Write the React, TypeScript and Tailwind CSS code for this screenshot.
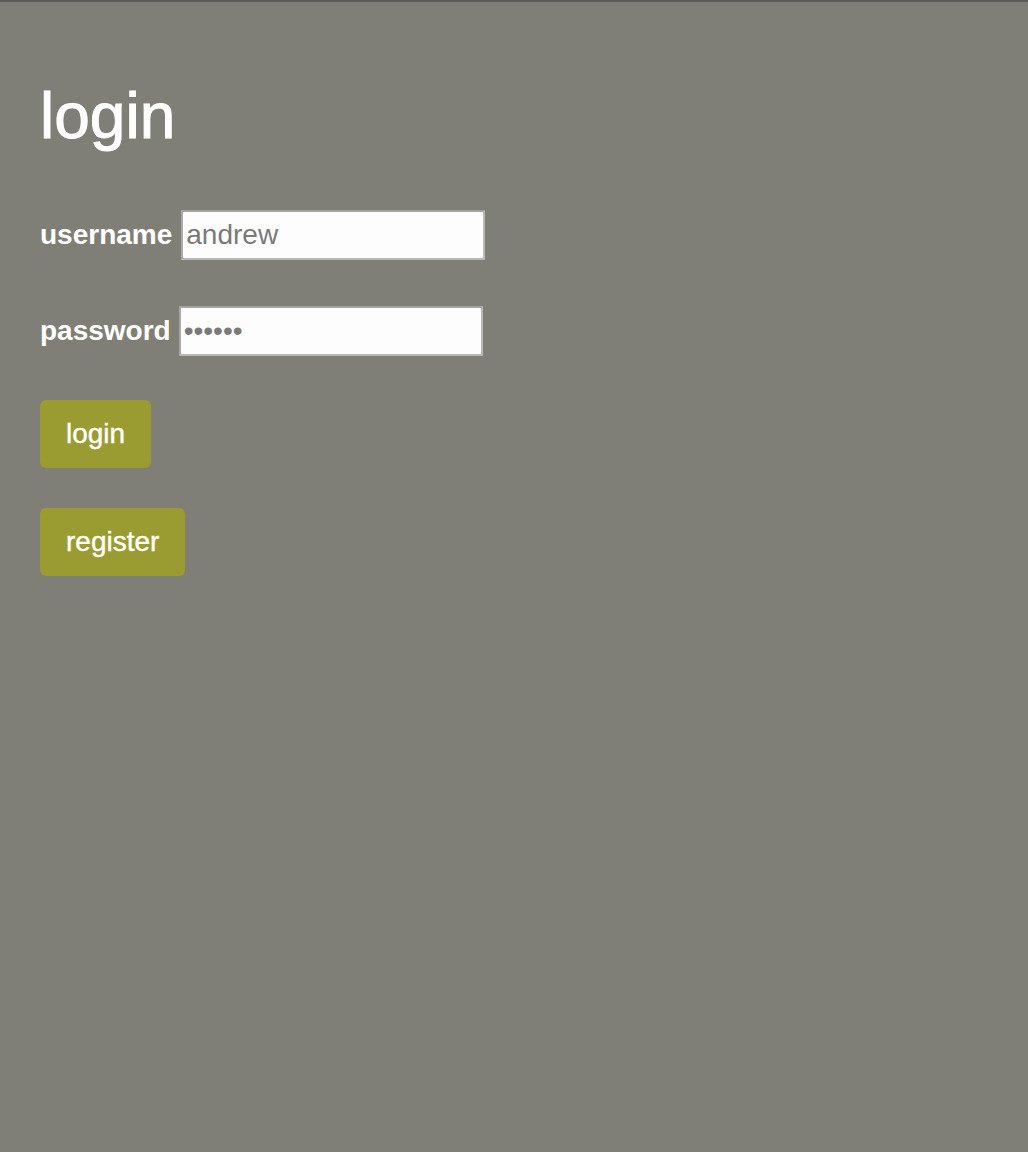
const field =
  "h-[50px] w-[304px] border-2 border-[#b9b9b9] border-t-[#a4a4a4] border-l-[#a8a8a8] bg-[#fdfdfd] px-[3px] text-[28px] text-[#7a7a7a] outline-none";

const btn =
  "h-[68px] rounded-md bg-[#9a9b30] px-[26px] text-[28px] leading-none text-white [-webkit-text-stroke:0.4px_white]";

export default function App() {
  return (
    <div
      className="min-h-[1152px] border-t-2 border-[#5b5b58] bg-[#7f7f77] px-10 text-white"
      style={{ fontFamily: '"Liberation Sans", Arial, sans-serif' }}
    >
      <h1 className="mt-[78px] text-[64px] leading-[72px] font-normal [-webkit-text-stroke:1px_white]">
        login
      </h1>

      <div className="mt-[58px] flex items-center gap-[9px]">
        <label className="text-[28px] font-bold">username</label>
        <input className={field} type="text" defaultValue="andrew" />
      </div>

      <div className="mt-[46px] flex items-center gap-[8px]">
        <label className="text-[28px] font-bold">password</label>
        <input className={field} type="password" defaultValue="secret" />
      </div>

      <div className="mt-[44px] flex flex-col items-start gap-10">
        <button className={btn}>login</button>
        <button className={btn}>register</button>
      </div>
    </div>
  );
}
